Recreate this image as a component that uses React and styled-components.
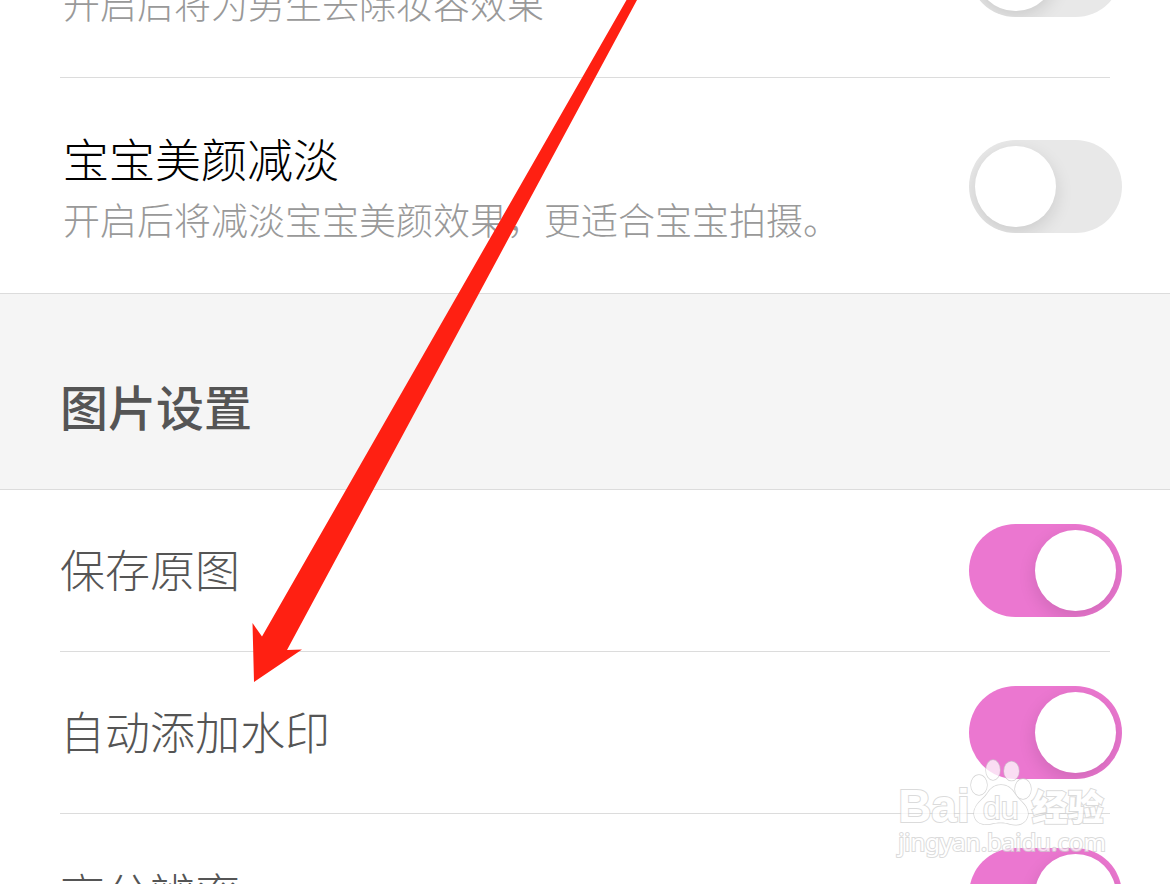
import React, { useState } from "react";
import styled, { createGlobalStyle } from "styled-components";

const GlobalStyle = createGlobalStyle`
    * {
        box-sizing: border-box;
    }

    body {
        margin: 0;
        background: #fff;
        font-family: "Noto Sans CJK SC", sans-serif;
    }
`;

function Setting({ id, title, description, muted, on }) {
    const [checked, setChecked] = useState(Boolean(on));

    return (
        <Row $tall={Boolean(description)}>
            <Label htmlFor={id} $tall={Boolean(description)}>
                {title && <Title $muted={muted}>{title}</Title>}
                {description && <Description>{description}</Description>}
            </Label>
            <Switch
                id={id}
                type="checkbox"
                role="switch"
                checked={checked}
                onChange={e => setChecked(e.target.checked)}
            />
        </Row>
    );
}

function Watermark() {
    return (
        <Brand>
            <BrandRow>
                <BrandLatin>Bai</BrandLatin>
                <Paw>
                    <svg width="62" height="68" viewBox="0 0 62 68">
                        <g fill="#fff" stroke="#c8c8c8" strokeWidth="1.4">
                            <ellipse cx="9" cy="27" rx="8" ry="10" />
                            <ellipse cx="23" cy="12" rx="7" ry="10" />
                            <ellipse cx="41.5" cy="13" rx="7.5" ry="9.5" />
                            <ellipse cx="53" cy="31" rx="8" ry="10" />
                            <path d="M31 27C24 27 20 31 17 36C13 42 4 46 4 56C5 66 14 67 20 66C28 64 34 64 40 66C48 68 57 66 58 56C58 47 49 43 45 36C42 31 38 27 31 27Z" />
                        </g>
                    </svg>
                    <PawText>du</PawText>
                </Paw>
                <BrandHan>经验</BrandHan>
            </BrandRow>
            <BrandUrl>jingyan.baidu.com</BrandUrl>
        </Brand>
    );
}

export default function App() {
    return (
        <Screen>
            <GlobalStyle />
            <List>
                <Setting
                    id="makeup"
                    description="开启后将为男生去除妆容效果"
                />
                <Divider />
                <Setting
                    id="baby"
                    title="宝宝美颜减淡"
                    description="开启后将减淡宝宝美颜效果，更适合宝宝拍摄。"
                />
                <SectionHeader>图片设置</SectionHeader>
                <Setting id="original" title="保存原图" muted on />
                <Divider />
                <Setting id="stamp" title="自动添加水印" muted on />
                <Divider />
                <Setting id="resolution" title="高分辨率" muted on />
            </List>
            <Arrow width="400" height="690" viewBox="250 0 400 690">
                <path
                    fill="#ff2012"
                    d="M626.5 0L262 636.5L252.5 623L254 682L302 649.5L287 650L637 0Z"
                />
            </Arrow>
            <Watermark />
        </Screen>
    );
}

const Screen = styled.main`
    position: relative;
    height: 100vh;
    overflow: hidden;
`;

/* scrolled partway down the list */
const List = styled.div`
    margin-top: -138px;
`;

const Row = styled.div`
    display: flex;
    justify-content: space-between;
    align-items: center;
    height: ${props => (props.$tall ? 215 : 161)}px;
    padding: ${props => (props.$tall ? 2 : 0)}px 48px 0 60px;
`;

const Label = styled.label`
    display: flex;
    flex-direction: column;
    justify-content: flex-end;
    min-height: ${props => (props.$tall ? 124 : 64)}px;
    padding-left: ${props => (props.$tall ? 3 : 0)}px;
    padding-bottom: ${props => (props.$tall ? 0 : 4)}px;
    font-weight: 300;
`;

const Title = styled.span`
    font-size: ${props => (props.$muted ? 45 : 46)}px;
    line-height: 64px;
    color: ${props => (props.$muted ? "#555" : "#000")};
`;

const Description = styled.span`
    font-size: 37px;
    line-height: 60px;
    color: #999;
`;

const Divider = styled.hr`
    height: 1px;
    margin: 0 60px;
    border: none;
    background: #dcdcdc;
`;

const SectionHeader = styled.h2`
    display: flex;
    align-items: center;
    height: 197px;
    margin: 0;
    padding: 26px 60px 0;
    border-top: 1px solid #dcdcdc;
    border-bottom: 1px solid #dcdcdc;
    background: #f5f5f5;
    color: #555;
    font-size: 48px;
    font-weight: 500;
    line-height: 64px;
`;

const Switch = styled.input`
    appearance: none;
    flex: none;
    width: 153px;
    height: 93px;
    margin: 0;
    padding: 6px;
    border-radius: 47px;
    background: #e8e8e8;
    overflow: hidden;
    cursor: pointer;

    &::before {
        content: "";
        display: block;
        width: 81px;
        height: 81px;
        border-radius: 50%;
        background: #fff;
        box-shadow: 0 6px 18px rgba(0, 0, 0, 0.12);
    }

    &:checked {
        background: #eb77d0;
    }

    &:checked::before {
        margin-left: auto;
    }
`;

const Arrow = styled.svg`
    position: absolute;
    top: 0;
    left: 250px;
    pointer-events: none;
`;

const Brand = styled.div`
    position: absolute;
    right: 64px;
    bottom: 26px;
    pointer-events: none;
    opacity: 0.75;
    color: #fff;
    -webkit-text-stroke: 2px #cfcfcf;
    paint-order: stroke fill;
`;

const BrandRow = styled.div`
    display: flex;
    align-items: flex-end;
`;

const BrandLatin = styled.span`
    font-family: "Liberation Sans", sans-serif;
    font-size: 46px;
    font-weight: 700;
    line-height: 40px;
`;

const Paw = styled.span`
    position: relative;
    display: flex;
`;

const PawText = styled.span`
    position: absolute;
    inset: 34px 0 0;
    text-align: center;
    font-family: "Liberation Sans", sans-serif;
    font-size: 32px;
    line-height: 32px;
`;

const BrandHan = styled.span`
    font-size: 36px;
    font-weight: 900;
    line-height: 42px;
`;

const BrandUrl = styled.div`
    font-family: "Noto Sans", sans-serif;
    font-size: 24px;
    line-height: 32px;
`;
